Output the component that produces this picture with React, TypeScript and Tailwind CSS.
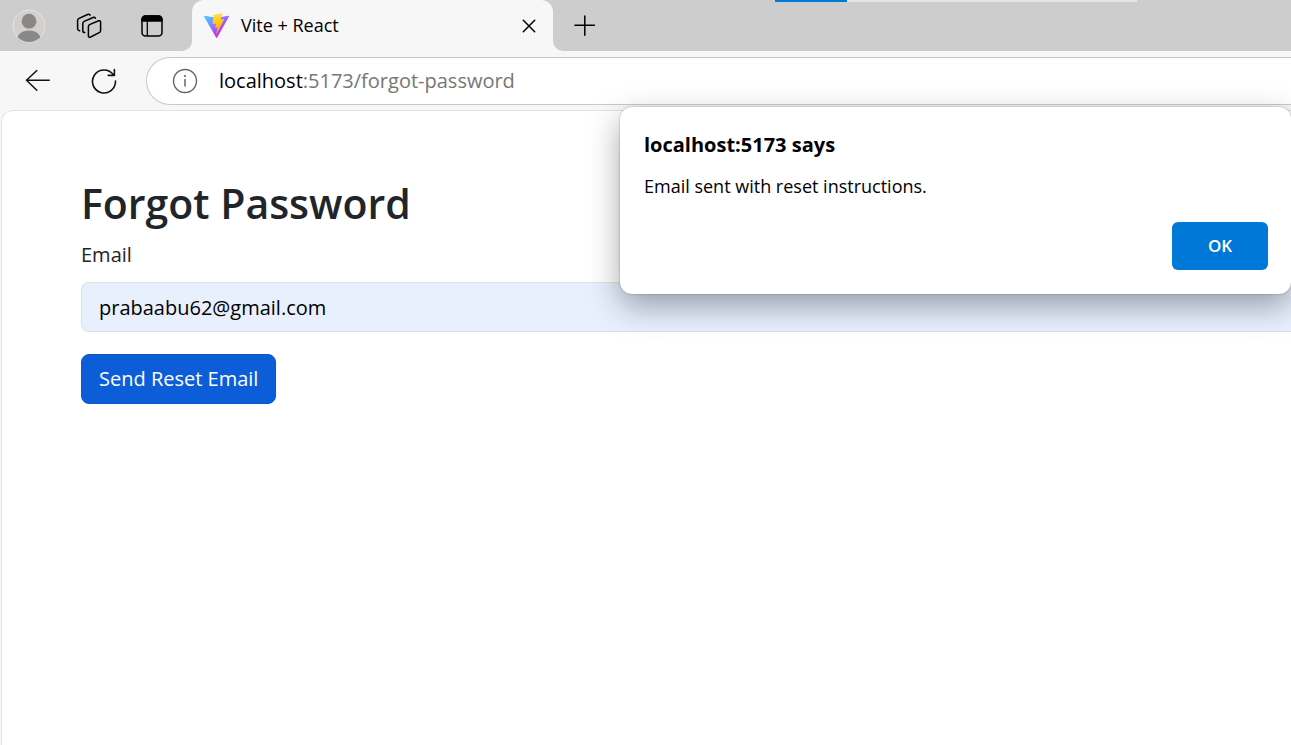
import React from "react";

function ProfileIcon() {
  return (
    <svg width="34" height="34" viewBox="0 0 34 34" aria-hidden="true">
      <defs>
        <clipPath id="avatar">
          <circle cx="17" cy="17" r="16" />
        </clipPath>
      </defs>
      <circle cx="17" cy="17" r="16" fill="#d2d0ce" stroke="#e6e4e2" />
      <g clipPath="url(#avatar)" fill="#8a8886">
        <circle cx="17" cy="12.2" r="7.4" />
        <path d="M5 31c0-5.500 5-9.600 12-9.600S29 25.500 29 31l-5 3H10z" />
      </g>
    </svg>
  );
}

function WorkspacesIcon() {
  return (
    <svg width="26" height="26" viewBox="0 0 26 26" fill="none" stroke="#000" strokeWidth="1.500" strokeLinejoin="round" strokeLinecap="round" aria-hidden="true">
      <path d="M13.600 11.600 22.600 7.800Q24.600 7.200 24.600 9.200V17.400Q24.600 19 23.200 19.700L14.600 24Q12.400 25 12.400 22.700V13.600Q12.400 12.200 13.600 11.600Z" />
      <path d="M8.800 19.600Q6.800 19.600 6.800 17.800V10.600Q6.800 9.100 8.200 8.400L17.100 4.500Q18.800 3.900 19.400 5.200" />
      <path d="M3.600 17.800Q1.600 17.400 1.600 15.600V7.600Q1.600 6.100 3 5.400L11.600 1.500Q13.300 .9 14.100 2.200" />
    </svg>
  );
}

function TabActionsIcon() {
  return (
    <svg width="22" height="22" viewBox="0 0 22 22" fill="none" stroke="#000" strokeWidth="1.500" aria-hidden="true">
      <rect x="1" y="1" width="20" height="20" rx="3.500" />
      <path d="M1 6V4.500A3.500 3.500 0 0 1 4.500 1h13A3.500 3.500 0 0 1 21 4.500V6z" fill="#000" />
      <path d="M6.300 6v15" strokeWidth="1.300" />
    </svg>
  );
}

function ViteLogo() {
  return (
    <svg width="25" height="25" viewBox="0 0 256 257" aria-hidden="true">
      <defs>
        <linearGradient id="vite-a" x1="-.828%" x2="57.636%" y1="7.652%" y2="78.411%">
          <stop offset="0%" stopColor="#41D1FF" />
          <stop offset="100%" stopColor="#BD34FE" />
        </linearGradient>
        <linearGradient id="vite-b" x1="43.376%" x2="50.316%" y1="2.242%" y2="89.030%">
          <stop offset="0%" stopColor="#FFEA83" />
          <stop offset="8.333%" stopColor="#FFDD35" />
          <stop offset="100%" stopColor="#FFA800" />
        </linearGradient>
      </defs>
      <path fill="url(#vite-a)" d="M255.153 37.938L134.897 252.976c-2.483 4.440-8.862 4.466-11.382.048L.875 37.958c-2.746-4.814 1.371-10.646 6.827-9.670l120.385 21.517a6.537 6.537 0 0 0 2.322-.004l117.867-21.483c5.438-.991 9.574 4.796 6.877 9.620Z" />
      <path fill="url(#vite-b)" d="M185.432.063L96.440 17.501a3.268 3.268 0 0 0-2.634 3.014l-5.474 92.456a3.268 3.268 0 0 0 3.997 3.378l24.777-5.718c2.318-.535 4.413 1.507 3.936 3.838l-7.361 36.047c-.495 2.426 1.782 4.500 4.151 3.780l15.304-4.649c2.372-.72 4.652 1.360 4.150 3.788l-11.698 56.621c-.732 3.542 3.979 5.473 5.943 2.437l1.313-2.028l72.516-144.720c1.215-2.423-.88-5.186-3.540-4.672l-25.505 4.922c-2.396.462-4.435-1.770-3.759-4.114l16.646-57.705c.677-2.350-1.370-4.583-3.769-4.113Z" />
    </svg>
  );
}

function CloseIcon() {
  return (
    <svg width="14" height="14" viewBox="0 0 14 14" stroke="#000" strokeWidth="1.500" strokeLinecap="round" aria-hidden="true">
      <path d="M1.300 1.300 12.700 12.700M12.700 1.300 1.300 12.700" />
    </svg>
  );
}

function PlusIcon() {
  return (
    <svg width="22" height="22" viewBox="0 0 22 22" stroke="#000" strokeWidth="1.500" strokeLinecap="round" aria-hidden="true">
      <path d="M10.800 .9v19.400M1 10.200h19.400" />
    </svg>
  );
}

function BackIcon() {
  return (
    <svg width="26" height="24" viewBox="0 0 26 24" fill="none" stroke="#111" strokeWidth="1.500" strokeLinecap="round" strokeLinejoin="round" aria-hidden="true">
      <path d="M12.800 1.500 2.500 11.300 12.800 21.200M2.500 11.300H25.200" />
    </svg>
  );
}

function ReloadIcon() {
  return (
    <svg width="26" height="26" viewBox="0 0 26 26" fill="none" stroke="#111" strokeWidth="1.600" strokeLinecap="round" strokeLinejoin="round" aria-hidden="true">
      <path d="M24.500 13A11.500 11.500 0 1 1 22.400 6.800M23.400 1.500V7.400H17.300" />
    </svg>
  );
}

function InfoIcon() {
  return (
    <svg width="26" height="26" viewBox="0 0 26 26" fill="none" stroke="#666" strokeWidth="1.400" aria-hidden="true">
      <circle cx="13" cy="13" r="11.500" />
      <path d="M13 11v7.500" strokeWidth="1.500" />
      <circle cx="13" cy="8" r="1.100" fill="#666" stroke="none" />
    </svg>
  );
}

function TabStrip() {
  return (
    <header className="relative flex h-[51px] bg-linear-to-b from-[#cdcdcd] from-50% to-[#f7f7f7] to-50%">
      <div className="flex w-48 items-center rounded-br-[10px] bg-[#cdcdcd] pl-3">
        <button type="button" aria-label="Profile" className="mr-[30px]"><ProfileIcon /></button>
        <button type="button" aria-label="Workspaces" className="mr-[39px]"><WorkspacesIcon /></button>
        <button type="button" aria-label="Tab actions"><TabActionsIcon /></button>
      </div>
      <div className="flex w-[361px] items-center rounded-t-[12px] bg-[#f7f7f7] pr-[17px] pl-3">
        <ViteLogo />
        <span className="ml-3 flex-1 text-[18px] text-black">Vite + React</span>
        <button type="button" aria-label="Close tab"><CloseIcon /></button>
      </div>
      <div className="flex flex-1 items-center rounded-bl-[10px] bg-[#cdcdcd] pl-[21px]">
        <button type="button" aria-label="New tab"><PlusIcon /></button>
      </div>
      <div className="absolute top-0 left-[775px] flex h-[2px] w-[362px] bg-[#e5e5e5]">
        <div className="w-[72px] bg-[#0078d7]" />
      </div>
    </header>
  );
}

function Toolbar() {
  return (
    <nav className="flex h-[59px] items-center overflow-hidden pl-6">
      <button type="button" aria-label="Back" className="mr-[41px]"><BackIcon /></button>
      <button type="button" aria-label="Refresh" className="mr-[29px]"><ReloadIcon /></button>
      <div className="flex h-12 flex-1 items-center rounded-l-full border-y border-l border-[#c9c9c9] bg-white pl-[25px]">
        <button type="button" aria-label="View site information" className="mr-[21px]"><InfoIcon /></button>
        <a href="#" className="text-[20px] text-[#767676]">
          <span className="text-black">localhost</span>:5173/forgot-password
        </a>
      </div>
    </nav>
  );
}

function AlertDialog() {
  return (
    <div
      role="alertdialog"
      aria-labelledby="alert-title"
      aria-describedby="alert-text"
      className="absolute top-[107px] right-0 flex w-[671px] flex-col rounded-[12px] bg-white py-6 pr-[23px] pl-6 text-black shadow-[0_0_2px_rgba(0,0,0,0.35),0_12px_32px_rgba(0,0,0,0.35)]"
    >
      <h2 id="alert-title" className="text-[20px] leading-7 font-bold">localhost:5173 says</h2>
      <p id="alert-text" className="mt-[15px] text-[18px] leading-6">Email sent with reset instructions.</p>
      <button type="button" className="mt-6 h-12 w-24 self-end rounded-[6px] bg-[#0078d7] text-[17px] font-semibold text-white">OK</button>
    </div>
  );
}

export default function App() {
  return (
    <div className="relative flex min-h-screen flex-col overflow-hidden bg-[#f7f7f7] font-['Open_Sans','Noto_Sans',sans-serif]">
      <TabStrip />
      <Toolbar />
      <main className="ml-px flex-1 rounded-tl-[12px] border-t border-l border-[#e3e3e3] bg-white pt-16 pl-[79px] text-[#212529]">
        <form onSubmit={(event) => event.preventDefault()}>
          <h1 className="text-[41px] leading-14 font-semibold">Forgot Password</h1>
          <label htmlFor="email" className="mt-1.5 block text-[20px] leading-9">Email</label>
          <input
            id="email"
            type="email"
            defaultValue="prabaabu62@gmail.com"
            className="mt-[9px] block h-[50px] w-full rounded-l-[8px] border-y border-l border-[#dee2e6] bg-[#e8f0fe] px-[17px] text-[20px] text-black outline-none"
          />
          <button type="submit" className="mt-[22px] h-[50px] rounded-[8px] border border-[#0a58ca] bg-[#0b5ed7] px-[17px] text-[20px] text-white">
            Send Reset Email
          </button>
        </form>
      </main>
      <AlertDialog />
    </div>
  );
}
